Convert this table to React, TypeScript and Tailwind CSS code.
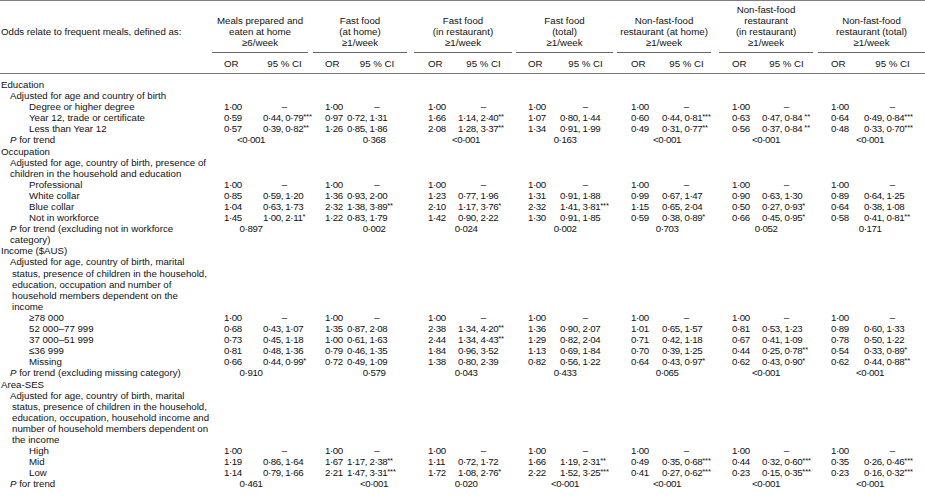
import type { ReactNode } from 'react';

type Row =
  | { t: 'h'; text: ReactNode; pad: string }
  | { t: 'd'; text: string; vals: string[] }
  | { t: 'p'; text: ReactNode; vals: string[] };

const colWidths = [
  'w-[208px]',
  'w-[51px]', 'w-[51px]',
  'w-[33px]', 'w-[68px]',
  'w-[43px]', 'w-[59px]',
  'w-[43px]', 'w-[59px]',
  'w-[43px]', 'w-[57px]',
  'w-[43px]', 'w-[57px]',
  'w-[45px]', 'w-[65px]',
];

// padding for the OR values inside each group
const orPad = ['pl-[16px]', 'pl-[15px]', 'pl-[17px]', 'pl-[15px]', 'pl-[16px]', 'pl-[17px]', 'pl-[16px]'];
// padding for the P for trend box (40px wide, centred text)
const pPad = ['pl-[23px]', 'pl-[44px]', 'pl-[35px]', 'pl-[32px]', 'pl-[32px]', 'pl-[31px]', 'pl-[35px]'];
const ruleMargin = ['ml-[4px] mr-[2px]', 'ml-[3px] mr-[4px]', 'ml-[3px] mr-[1px]', 'ml-[3px] mr-[2px]', 'ml-[2px] mr-[4px]', 'ml-[4px] mr-[2px]', 'ml-[3px] mr-0'];

const groups: string[][] = [
  ['Meals prepared and', 'eaten at home', '≥6/week'],
  ['Fast food', '(at home)', '≥1/week'],
  ['Fast food', '(in restaurant)', '≥1/week'],
  ['Fast food', '(total)', '≥1/week'],
  ['Non-fast-food', 'restaurant (at home)', '≥1/week'],
  ['Non-fast-food', 'restaurant', '(in restaurant)', '≥1/week'],
  ['Non-fast-food', 'restaurant (total)', '≥1/week'],
];

const ref = ['1·00', '–', '1·00', '–', '1·00', '–', '1·00', '–', '1·00', '–', '1·00', '–', '1·00', '–'];

const P = <><i>P</i> for trend</>;

const rows: Row[] = [
  { t: 'h', text: 'Education', pad: 'pl-[1px]' },
  { t: 'h', text: 'Adjusted for age and country of birth', pad: 'pl-[10px]' },
  { t: 'd', text: 'Degree or higher degree', vals: ref },
  { t: 'd', text: 'Year 12, trade or certificate', vals: ['0·59', '0·44, 0·79***', '0·97', '0·72, 1·31', '1·66', '1·14, 2·40**', '1·07', '0·80, 1·44', '0·60', '0·44, 0·81***', '0·63', '0·47, 0·84 **', '0·64', '0·49, 0·84***'] },
  { t: 'd', text: 'Less than Year 12', vals: ['0·57', '0·39, 0·82**', '1·26', '0·85, 1·86', '2·08', '1·28, 3·37**', '1·34', '0·91, 1·99', '0·49', '0·31, 0·77**', '0·56', '0·37, 0·84 **', '0·48', '0·33, 0·70***'] },
  { t: 'p', text: P, vals: ['<0·001', '0·368', '<0·001', '0·163', '<0·001', '<0·001', '<0·001'] },
  { t: 'h', text: 'Occupation', pad: 'pl-[1px]' },
  { t: 'h', text: 'Adjusted for age, country of birth, presence of', pad: 'pl-[10px]' },
  { t: 'h', text: 'children in the household and education', pad: 'pl-[10px]' },
  { t: 'd', text: 'Professional', vals: ref },
  { t: 'd', text: 'White collar', vals: ['0·85', '0·59, 1·20', '1·36', '0·93, 2·00', '1·23', '0·77, 1·96', '1·31', '0·91, 1·88', '0·99', '0·67, 1·47', '0·90', '0·63, 1·30', '0·89', '0·64, 1·25'] },
  { t: 'd', text: 'Blue collar', vals: ['1·04', '0·63, 1·73', '2·32', '1·38, 3·89**', '2·10', '1·17, 3·76*', '2·32', '1·41, 3·81***', '1·15', '0·65, 2·04', '0·50', '0·27, 0·93*', '0·64', '0·38, 1·08'] },
  { t: 'd', text: 'Not in workforce', vals: ['1·45', '1·00, 2·11*', '1·22', '0·83, 1·79', '1·42', '0·90, 2·22', '1·30', '0·91, 1·85', '0·59', '0·38, 0·89*', '0·66', '0·45, 0·95*', '0·58', '0·41, 0·81**'] },
  { t: 'p', text: <>{P} (excluding not in workforce</>, vals: ['0·897', '0·002', '0·024', '0·002', '0·703', '0·052', '0·171'] },
  { t: 'h', text: 'category)', pad: 'pl-[10px]' },
  { t: 'h', text: 'Income ($AUS)', pad: 'pl-[1px]' },
  { t: 'h', text: 'Adjusted for age, country of birth, marital', pad: 'pl-[10px]' },
  { t: 'h', text: 'status, presence of children in the household,', pad: 'pl-[12px]' },
  { t: 'h', text: 'education, occupation and number of', pad: 'pl-[12px]' },
  { t: 'h', text: 'household members dependent on the', pad: 'pl-[12px]' },
  { t: 'h', text: 'income', pad: 'pl-[12px]' },
  { t: 'd', text: '≥78 000', vals: ref },
  { t: 'd', text: '52 000–77 999', vals: ['0·68', '0·43, 1·07', '1·35', '0·87, 2·08', '2·38', '1·34, 4·20**', '1·36', '0·90, 2·07', '1·01', '0·65, 1·57', '0·81', '0·53, 1·23', '0·89', '0·60, 1·33'] },
  { t: 'd', text: '37 000–51 999', vals: ['0·73', '0·45, 1·18', '1·00', '0·61, 1·63', '2·44', '1·34, 4·43**', '1·29', '0·82, 2·04', '0·71', '0·42, 1·18', '0·67', '0·41, 1·09', '0·78', '0·50, 1·22'] },
  { t: 'd', text: '≤36 999', vals: ['0·81', '0·48, 1·36', '0·79', '0·46, 1·35', '1·84', '0·96, 3·52', '1·13', '0·69, 1·84', '0·70', '0·39, 1·25', '0·44', '0·25, 0·78**', '0·54', '0·33, 0·89*'] },
  { t: 'd', text: 'Missing', vals: ['0·66', '0·44, 0·99*', '0·72', '0·49, 1·09', '1·38', '0·80, 2·39', '0·82', '0·56, 1·22', '0·64', '0·43, 0·97*', '0·62', '0·43, 0·90*', '0·62', '0·44, 0·88**'] },
  { t: 'p', text: <>{P} (excluding missing category)</>, vals: ['0·910', '0·579', '0·043', '0·433', '0·065', '<0·001', '<0·001'] },
  { t: 'h', text: 'Area-SES', pad: 'pl-[1px]' },
  { t: 'h', text: 'Adjusted for age, country of birth, marital', pad: 'pl-[10px]' },
  { t: 'h', text: 'status, presence of children in the household,', pad: 'pl-[12px]' },
  { t: 'h', text: 'education, occupation, household income and', pad: 'pl-[12px]' },
  { t: 'h', text: 'number of household members dependent on', pad: 'pl-[12px]' },
  { t: 'h', text: 'the income', pad: 'pl-[12px]' },
  { t: 'd', text: 'High', vals: ref },
  { t: 'd', text: 'Mid', vals: ['1·19', '0·86, 1·64', '1·67', '1·17, 2·38**', '1·11', '0·72, 1·72', '1·66', '1·19, 2·31**', '0·49', '0·35, 0·68***', '0·44', '0·32, 0·60***', '0·35', '0·26, 0·46***'] },
  { t: 'd', text: 'Low', vals: ['1·14', '0·79, 1·66', '2·21', '1·47, 3·31***', '1·72', '1·08, 2·76*', '2·22', '1·52, 3·25***', '0·41', '0·27, 0·62***', '0·23', '0·15, 0·35***', '0·23', '0·16, 0·32***'] },
  { t: 'p', text: P, vals: ['0·461', '<0·001', '0·020', '<0·001', '<0·001', '<0·001', '<0·001'] },
];

const Value = ({ v }: { v: string }) => {
  const m = v.match(/^(.*?)(\s?\*+)$/);
  if (!m) return <>{v}</>;
  return (
    <>
      {m[1]}
      <span className="relative -top-[2px] text-[7.5px] leading-[0] tracking-normal">{m[2]}</span>
    </>
  );
};

export default function App() {
  return (
    <div className="w-[925px] h-[497px] overflow-hidden bg-white text-[#111] font-['Liberation_Sans',Arial,sans-serif] text-[9.7px] leading-[11.1px]">
      <table className="w-[925px] table-fixed border-collapse border-t border-[#808080]">
        <colgroup>
          {colWidths.map((w, i) => (
            <col key={i} className={w} />
          ))}
        </colgroup>
        <thead>
          <tr>
            <th className="p-0 pt-[25px] pl-[1px] align-top text-left font-normal whitespace-nowrap">
              Odds relate to frequent meals, defined as:
            </th>
            {groups.map((g, i) => (
              <th key={i} colSpan={2} className="p-0 pt-[3px] align-bottom font-normal">
                <div className={`border-b border-[#666] pb-[4px] text-center ${ruleMargin[i]}`}>
                  {g.map((line, j) => (
                    <div key={j} className="whitespace-nowrap">{line}</div>
                  ))}
                </div>
              </th>
            ))}
          </tr>
          <tr className="border-b border-[#777]">
            <th className="p-0" />
            {groups.map((_, i) => [
              <th key={`o${i}`} className={`p-0 pt-[5px] pb-[4px] text-left font-normal ${orPad[i]}`}>OR</th>,
              <th key={`c${i}`} className="p-0 pt-[5px] pb-[4px] text-center font-normal whitespace-nowrap">95 % CI</th>,
            ])}
          </tr>
        </thead>
        <tbody>
          <tr>
            <td colSpan={15} className="p-0 h-[5px]" />
          </tr>
          {rows.map((r, i) => {
            if (r.t === 'h') {
              return (
                <tr key={i}>
                  <td colSpan={15} className={`p-0 whitespace-nowrap ${r.pad}`}>{r.text}</td>
                </tr>
              );
            }
            if (r.t === 'p') {
              return (
                <tr key={i}>
                  <td className="p-0 pl-[10px] whitespace-nowrap">{r.text}</td>
                  {r.vals.map((v, j) => (
                    <td key={j} colSpan={2} className={`p-0 ${pPad[j]}`}>
                      <div className="w-[40px] text-center whitespace-nowrap tracking-[-0.4px]">{v}</div>
                    </td>
                  ))}
                </tr>
              );
            }
            return (
              <tr key={i}>
                <td className="p-0 pl-[29px] whitespace-nowrap">{r.text}</td>
                {r.vals.map((v, j) =>
                  j % 2 === 0 ? (
                    <td key={j} className={`p-0 whitespace-nowrap tracking-[-0.4px] ${orPad[j / 2]}`}>{v}</td>
                  ) : v === '–' ? (
                    <td key={j} className="p-0 text-center">–</td>
                  ) : (
                    <td key={j} className="p-0 pl-[4px] whitespace-nowrap tracking-[-0.4px]">
                      <Value v={v} />
                    </td>
                  )
                )}
              </tr>
            );
          })}
          <tr className="border-b-[1.5px] border-[#777]">
            <td colSpan={15} className="p-0 h-[10px]" />
          </tr>
        </tbody>
      </table>
    </div>
  );
}
